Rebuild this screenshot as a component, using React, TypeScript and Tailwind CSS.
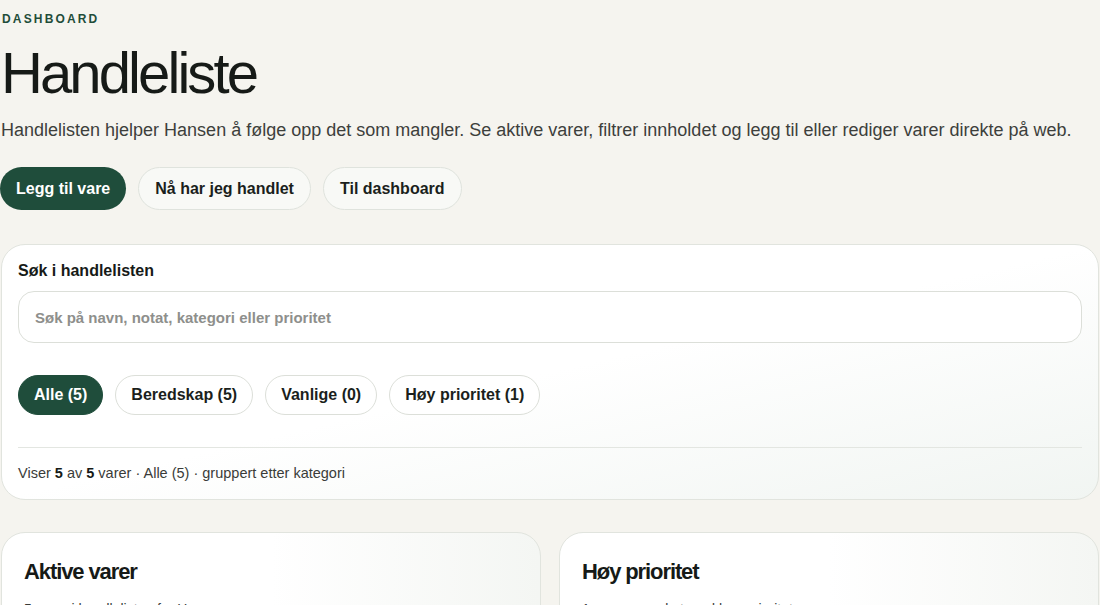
import React, { useState } from 'react';

const filters = [
  { id: 'alle', label: 'Alle (5)' },
  { id: 'beredskap', label: 'Beredskap (5)' },
  { id: 'vanlige', label: 'Vanlige (0)' },
  { id: 'hoy', label: 'Høy prioritet (1)' },
];

const App: React.FC = () => {
  const [active, setActive] = useState('alle');
  const [query, setQuery] = useState('');

  return (
    <div className="min-h-screen bg-[#f5f4ef] font-['Liberation_Sans',Arial,sans-serif] text-[#1b1f1c] overflow-hidden">
      <div className="flex flex-col pt-[11px] pr-px pl-px">
        {/* Header */}
        <p className="text-[12px] font-bold uppercase tracking-[0.18em] text-[#1f4d3a] leading-[16px] ml-px">Dashboard</p>
        <h1 className="mt-[15px] text-[58px] leading-[62px] tracking-[-0.05em] text-[#161a17] font-normal">Handleliste</h1>
        <p className="mt-[13px] text-[18px] leading-[26px] text-[#3d3f3c]">
          Handlelisten hjelper Hansen å følge opp det som mangler. Se aktive varer, filtrer innholdet og legg til eller rediger varer direkte på web.
        </p>

        <div className="mt-[24px] flex gap-[12px] -ml-px">
          <button className="h-[43px] px-4 rounded-full bg-[#1f4d3b] text-white text-[16px] font-bold">Legg til vare</button>
          <button className="h-[43px] px-4 rounded-full border border-[#dfe3dd] bg-[#f8f9f6] text-[#1b1f1c] text-[16px] font-bold">Nå har jeg handlet</button>
          <button className="h-[43px] px-4 rounded-full border border-[#dfe3dd] bg-[#f8f9f6] text-[#1b1f1c] text-[16px] font-bold">Til dashboard</button>
        </div>

        {/* Search card */}
        <div className="mt-[34px] rounded-[24px] border border-[#e1e4de] bg-gradient-to-br from-white via-white to-[#f1f5f2] px-4 pt-[16px] pb-[17px]">
          <label className="block text-[16px] font-bold leading-[20px] text-[#161a17]">Søk i handlelisten</label>
          <input
            value={query}
            onChange={(e) => setQuery(e.target.value)}
            placeholder="Søk på navn, notat, kategori eller prioritet"
            className="mt-[10px] w-full h-[52px] rounded-[16px] border border-[#dcdfd9] bg-white px-4 text-[15px] font-bold placeholder:text-[#8e8f8c] outline-none"
          />
          <div className="mt-[32px] flex gap-[12px]">
            {filters.map((f) => (
              <button
                key={f.id}
                onClick={() => setActive(f.id)}
                className={
                  active === f.id
                    ? 'h-[40px] px-[15px] rounded-full bg-[#1f4d3b] text-white text-[16px] font-bold border border-[#1f4d3b]'
                    : 'h-[40px] px-[15px] rounded-full bg-white text-[#1b1f1c] text-[16px] font-bold border border-[#dcdfd9]'
                }
              >
                {f.label}
              </button>
            ))}
          </div>
          <div className="mt-[32px] border-t border-[#e3e6e1] pt-[16px] text-[14.5px] leading-[18px] text-[#3a3c39]">
            Viser <b className="text-[#161a17]">5</b> av <b className="text-[#161a17]">5</b> varer · Alle (5) · gruppert etter kategori
          </div>
        </div>

        {/* Summary cards */}
        <div className="mt-[32px] grid grid-cols-2 gap-[18px]">
          <div className="rounded-[24px] border border-[#e1e4de] bg-gradient-to-r from-white via-white to-[#f4f6f3] px-[22px] pt-[25px] pb-6">
            <h2 className="text-[22px] font-bold tracking-[-0.05em] leading-[28px] text-[#161a17]">Aktive varer</h2>
            <p className="mt-[14px] text-[14px] leading-[18px] text-[#3a3c39]">5 varer i handlelisten for Hansen</p>
          </div>
          <div className="rounded-[24px] border border-[#e1e4de] bg-gradient-to-r from-white via-white to-[#f4f6f3] px-[22px] pt-[25px] pb-6">
            <h2 className="text-[22px] font-bold tracking-[-0.05em] leading-[28px] text-[#161a17]">Høy prioritet</h2>
            <p className="mt-[14px] text-[14px] leading-[18px] text-[#3a3c39]">1 vare er merket med høy prioritet</p>
          </div>
        </div>
      </div>
    </div>
  );
};

export default App;
